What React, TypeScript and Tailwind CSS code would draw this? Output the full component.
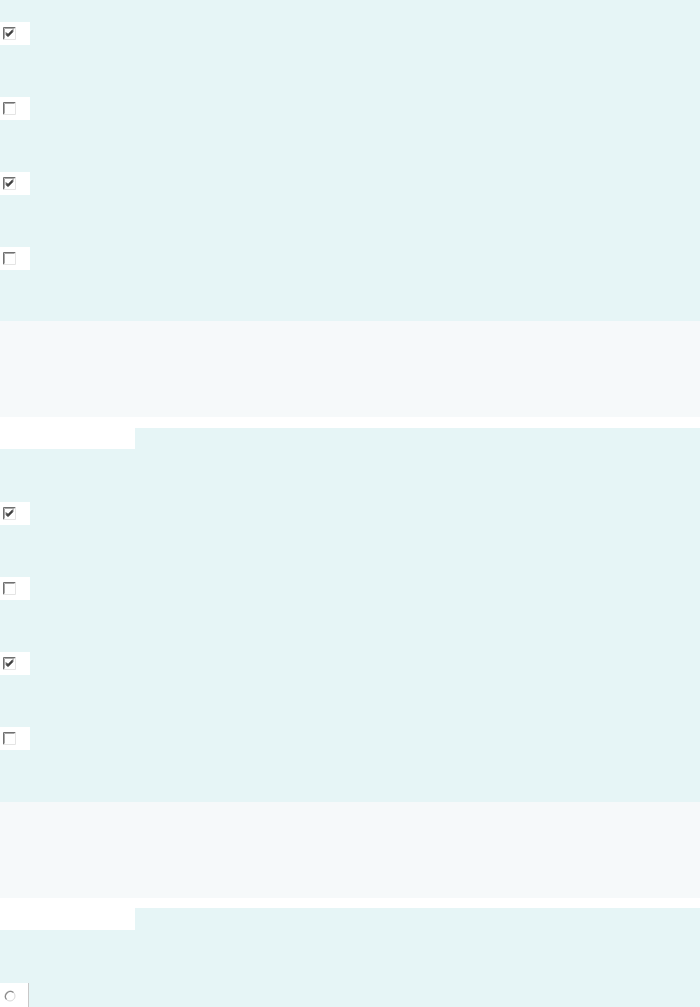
import React from 'react';

const CheckBox: React.FC<{ checked: boolean }> = ({ checked }) => (
  <svg width="13" height="13" viewBox="0 0 13 13" className="block">
    <rect x="0" y="0" width="13" height="13" fill="#ffffff" />
    <path d="M0.5 12.5 V0.5 H12.5" fill="none" stroke="#707070" />
    <path d="M1.5 11.5 V1.5 H11.5" fill="none" stroke="#a8a8a8" />
    <path d="M12.5 0.5 V12.5 H0.5" fill="none" stroke="#e4e4e4" />
    {checked && (
      <path d="M3 5.5 L5 7.5 L10 2.5 M3 6.5 L5 8.5 L10 3.5 M3 7.5 L5 9.5 L10 4.5" fill="none" stroke="#000000" strokeWidth="1" />
    )}
  </svg>
);

const Radio: React.FC = () => (
  <svg width="12" height="12" viewBox="0 0 12 12" className="block">
    <circle cx="6" cy="6" r="5" fill="#ffffff" stroke="#d8d8d8" />
    <path d="M9.5 2.5 A5 5 0 0 0 2.5 9.5" fill="none" stroke="#8a8a8a" strokeWidth="1.2" />
  </svg>
);

const Row: React.FC<{ checked: boolean }> = ({ checked }) => (
  <div className="w-[30px] h-[23px] bg-white flex items-center pl-[3px]">
    <CheckBox checked={checked} />
  </div>
);

const Rows: React.FC = () => (
  <div className="flex flex-col gap-[52px]">
    <Row checked />
    <Row checked={false} />
    <Row checked />
    <Row checked={false} />
  </div>
);

const Divider: React.FC<{ gap: string }> = ({ gap }) => (
  <>
    <div className="h-[96px] bg-[#f6f9fa]" />
    <div className={gap === 'lg' ? 'h-[11px] bg-white' : 'h-[10px] bg-white'} />
  </>
);

export default function App() {
  return (
    <div className="w-[700px] h-[1007px] overflow-hidden bg-[#e6f5f6] font-['Liberation_Sans',sans-serif]">
      <div className="pt-[22px] pb-[51px]">
        <Rows />
      </div>
      <Divider gap="lg" />
      <div className="w-[135px] h-[21px] bg-white" />
      <div className="pt-[53px] pb-[52px]">
        <Rows />
      </div>
      <Divider gap="sm" />
      <div className="w-[135px] h-[22px] bg-white" />
      <div className="pt-[53px]">
        <div className="w-[29px] h-[26px] bg-white border-r border-[#c8c8c8] flex items-center pl-[4px]">
          <Radio />
        </div>
      </div>
    </div>
  );
}
